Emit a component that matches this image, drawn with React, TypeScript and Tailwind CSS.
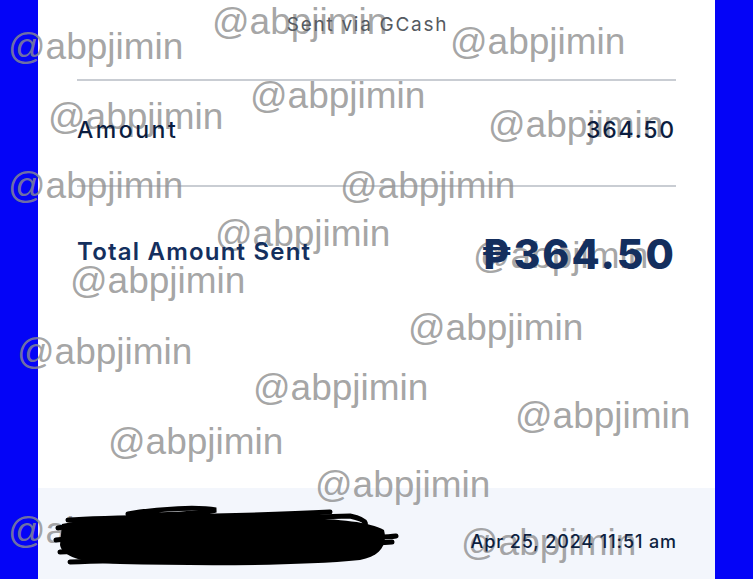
const marks: { x: number; y: number }[] = [
  { x: 8, y: 22 },
  { x: 212, y: -3 },
  { x: 450, y: 17 },
  { x: 48, y: 92 },
  { x: 250, y: 71 },
  { x: 488, y: 100 },
  { x: 8, y: 161 },
  { x: 340, y: 161 },
  { x: 215, y: 209 },
  { x: 70, y: 256 },
  { x: 473, y: 231 },
  { x: 408, y: 303 },
  { x: 17, y: 327 },
  { x: 253, y: 363 },
  { x: 515, y: 391 },
  { x: 108, y: 417 },
  { x: 315, y: 460 },
  { x: 8, y: 506 },
  { x: 461, y: 518 },
];

const Scribble = () => (
  <svg
    className="absolute left-0 top-0 pointer-events-none"
    width={753}
    height={579}
    viewBox="0 0 753 579"
    fill="none"
  >
    <path
      d="M62 524 C120 512 200 516 300 518 C340 519 370 522 384 530 C388 545 380 556 360 560 C300 566 200 566 120 564 C80 563 62 556 60 545 Z"
      fill="#000"
    />
    <g stroke="#000" strokeWidth={5} strokeLinecap="round">
      <path d="M128 514 C160 508 200 507 216 510 C200 514 150 516 128 514" />
      <path d="M58 528 C110 518 250 520 350 516 C368 520 372 526 352 530" />
      <path d="M56 540 C120 532 300 534 380 532" />
      <path d="M60 552 C150 546 300 548 392 542" />
      <path d="M70 562 C160 558 300 560 374 552" />
      <path d="M68 520 C120 516 220 518 330 512" />
      <path d="M340 540 C360 536 384 538 396 536" />
    </g>
  </svg>
);

export default function App() {
  return (
    <div className="relative w-[753px] h-[579px] overflow-hidden flex bg-[#0404f7]">
      <div className="w-[38px] shrink-0" />
      <div className="w-[677px] shrink-0 flex flex-col bg-white font-['Inter',sans-serif]">
        <div className="h-[79px] flex justify-center pt-[11px] pr-[18px]">
          <span className="relative z-20 text-[19px] tracking-[0.09em] text-[#555a61]">Sent via GCash</span>
        </div>
        <div className="mx-[39px] border-t-2 border-[#c9cdd3]" />
        <div className="h-[104px] mx-[39px] pb-[6px] flex items-center justify-between">
          <span className="relative z-20 text-[23px] font-medium text-[#0b1d3f] tracking-[0.11em]">Amount</span>
          <span className="relative z-20 text-[23px] font-medium text-[#0b1d3f] tracking-[0.08em]">364.50</span>
        </div>
        <div className="mx-[39px] border-t-2 border-[#c9cdd3]" />
        <div className="mt-[47px] mx-[39px] flex items-center justify-between text-[#142f5e]">
          <span className="relative z-20 text-[24px] font-semibold tracking-[0.05em] pb-[5px]">Total Amount Sent</span>
          <span className="relative z-20 text-[41px] font-extrabold leading-none tracking-[0.05em]">₱364.50</span>
        </div>
        <div className="flex-1" />
        <div className="h-[91px] bg-[#f3f6fc] flex items-center justify-end pr-[38px] pt-[16px]">
          <span className="relative z-20 text-[18px] font-medium tracking-[0.05em] text-[#0d1f40]">Apr 25, 2024 11:51 am</span>
        </div>
      </div>
      <div className="flex-1" />
      <div className="absolute inset-0 pointer-events-none z-10 font-['Liberation_Sans',Arial,sans-serif] text-[37px] text-[#8e8e8e]/80 leading-[50px]">
        {marks.map((m, i) => (
          <span key={i} className="absolute whitespace-nowrap" style={{ left: m.x, top: m.y }}>
            @abpjimin
          </span>
        ))}
      </div>
      <div className="absolute inset-0 z-30 pointer-events-none">
        <Scribble />
      </div>
    </div>
  );
}
